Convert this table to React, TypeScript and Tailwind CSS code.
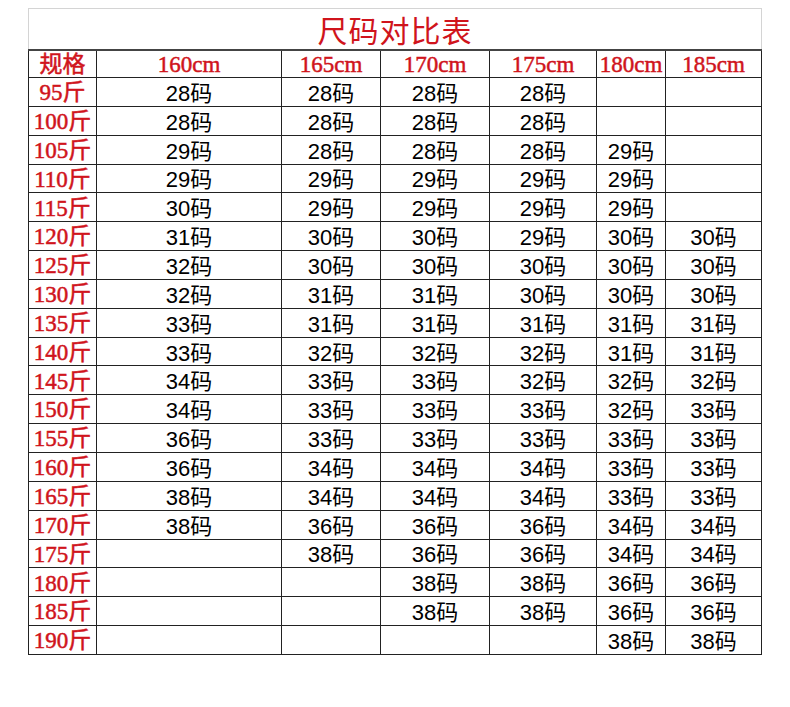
// Size chart (尺码对比表): weight rows × height columns, values in 码.
const HEIGHTS = ["160cm", "165cm", "170cm", "175cm", "180cm", "185cm"];

// column widths in px, first is the 规格 / weight label column
const COL_W = ["w-[69px]", "w-[185px]", "w-[99px]", "w-[109px]", "w-[107px]", "w-[69px]", "w-[96px]"];

const ROWS: [string, (number | null)[]][] = [
  ["95斤", [28, 28, 28, 28, null, null]],
  ["100斤", [28, 28, 28, 28, null, null]],
  ["105斤", [29, 28, 28, 28, 29, null]],
  ["110斤", [29, 29, 29, 29, 29, null]],
  ["115斤", [30, 29, 29, 29, 29, null]],
  ["120斤", [31, 30, 30, 29, 30, 30]],
  ["125斤", [32, 30, 30, 30, 30, 30]],
  ["130斤", [32, 31, 31, 30, 30, 30]],
  ["135斤", [33, 31, 31, 31, 31, 31]],
  ["140斤", [33, 32, 32, 32, 31, 31]],
  ["145斤", [34, 33, 33, 32, 32, 32]],
  ["150斤", [34, 33, 33, 33, 32, 33]],
  ["155斤", [36, 33, 33, 33, 33, 33]],
  ["160斤", [36, 34, 34, 34, 33, 33]],
  ["165斤", [38, 34, 34, 34, 33, 33]],
  ["170斤", [38, 36, 36, 36, 34, 34]],
  ["175斤", [null, 38, 36, 36, 34, 34]],
  ["180斤", [null, null, 38, 38, 36, 36]],
  ["185斤", [null, null, 38, 38, 36, 36]],
  ["190斤", [null, null, null, null, 38, 38]],
];

// red Song-style labels: regular serif with a light stroke to thicken it a touch
const RED =
  "font-['Liberation_Serif','Noto_Sans_CJK_SC',serif] text-[23px] text-[#d0141c] [-webkit-text-stroke:0.5px_#d0141c]";
const DATA = "font-['Liberation_Sans','Noto_Sans_CJK_SC',sans-serif] text-[22px] text-black";

function Cell({ i, className, children }: { i: number; className?: string; children?: React.ReactNode }) {
  return (
    <div
      className={`${COL_W[i]} shrink-0 flex items-center justify-center border-r border-[#222] ${
        i === 0 ? "border-l" : ""
      } ${className ?? ""}`}
    >
      {children}
    </div>
  );
}

export default function App() {
  return (
    <div className="min-h-[707px] w-[790px] bg-white pl-[28px] pt-[8px]">
      <div className="w-[734px]">
        {/* Title */}
        <div className="flex h-[41px] items-center justify-center border-x border-t border-[#d4d4d4]">
          <span className="font-['Noto_Sans_CJK_SC',sans-serif] text-[30px] leading-none tracking-[1px] text-[#d0141c]">
            尺码对比表
          </span>
        </div>

        {/* Header row */}
        <div className="flex h-[29px] border-y border-t-2 border-y-[#222] border-t-[#444]">
          <Cell i={0} className={`${RED} pt-[2px]`}>
            规格
          </Cell>
          {HEIGHTS.map((h, k) => (
            <Cell key={h} i={k + 1} className={`${RED} pt-[2px]`}>
              {h}
            </Cell>
          ))}
        </div>

        {/* Body rows */}
        {ROWS.map(([w, vals]) => (
          <div key={w} className="flex h-[28.85px] border-b border-[#222]">
            <Cell i={0} className={`${RED} pt-[3px]`}>
              {w}
            </Cell>
            {vals.map((v, k) => (
              <Cell key={k} i={k + 1} className={`${DATA} pt-[3px]`}>
                {v != null ? `${v}码` : ""}
              </Cell>
            ))}
          </div>
        ))}
      </div>
    </div>
  );
}
